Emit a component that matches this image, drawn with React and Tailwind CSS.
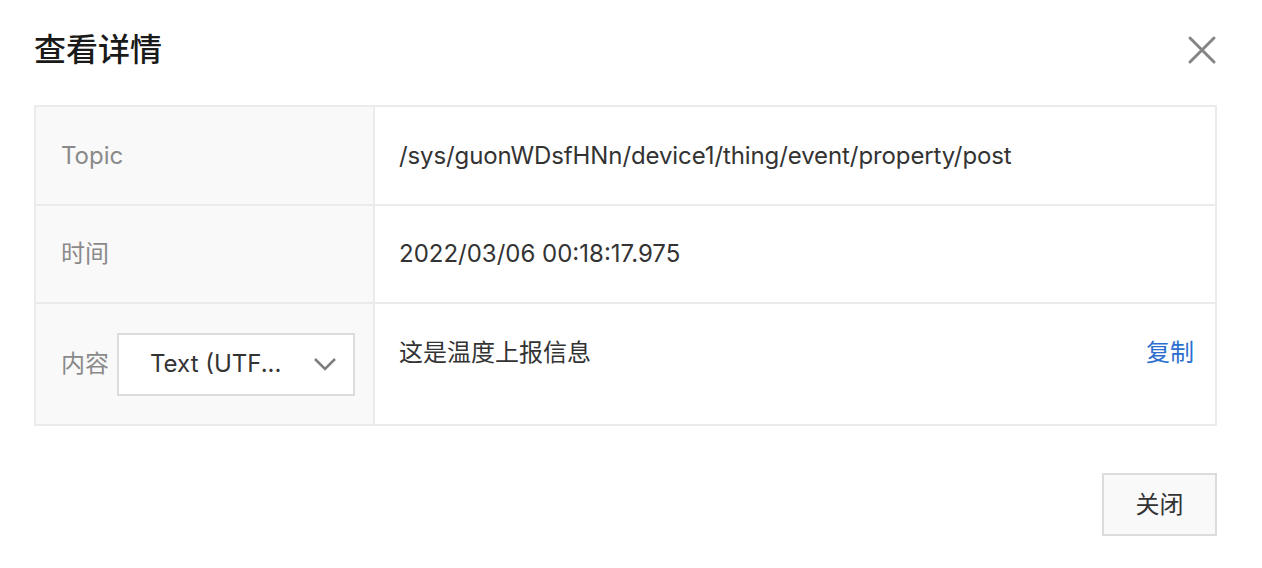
import React from 'react';

const font = { fontFamily: '"Inter", "Noto Sans CJK SC", sans-serif' };

const Row = ({ label, children, className = '', valueClass = '' }) => (
    <div className={`flex ${className}`}>
        <div className="w-[339px] shrink-0 bg-[#f9f9f9] border-r-2 border-[#ebebeb] flex items-center pl-[25px] gap-[8px]">
            {label}
        </div>
        <div className={`flex-1 pl-[24px] pr-[21px] ${valueClass}`}>{children}</div>
    </div>
);

export default function App() {
    return (
        <div className="w-[1262px] h-[568px] bg-white" style={font}>
            {/* Header */}
            <div className="h-[100px] flex items-center justify-between pl-[34px] pr-[44px]">
                <h1 className="text-[32px] font-medium text-[#1a1a1a] leading-none">查看详情</h1>
                <svg width="32" height="32" viewBox="0 0 32 32" className="text-[#858585]">
                    <path d="M4 4L28 28M28 4L4 28" stroke="currentColor" strokeWidth="3" strokeLinecap="round" />
                </svg>
            </div>

            {/* Table */}
            <div className="w-[1183px] ml-[34px] mt-[5px] border-2 border-[#ebebeb] text-[24px]">
                <Row label={<span className="text-[#8a8a8a]">Topic</span>} className="h-[97px]" valueClass="flex items-center text-[#333] tracking-[-0.1px]">
                    /sys/guonWDsfHNn/device1/thing/event/property/post
                </Row>
                <Row label={<span className="text-[#8a8a8a]">时间</span>} className="h-[98px] border-t-2 border-[#ebebeb]" valueClass="flex items-center text-[#333]">
                    2022/03/06 00:18:17.975
                </Row>
                <Row
                    label={
                        <>
                            <span className="text-[#8a8a8a]">内容</span>
                            <div className="w-[238px] h-[63px] bg-white border-2 border-[#dcdcdc] flex items-center justify-between pl-[31px] pr-[16px]">
                                <span className="text-[#333]">Text (UTF...</span>
                                <svg width="24" height="14" viewBox="0 0 24 14" className="text-[#7d7d7d]">
                                    <path d="M2 2L12 12L22 2" fill="none" stroke="currentColor" strokeWidth="2.5" />
                                </svg>
                            </div>
                        </>
                    }
                    className="h-[122px] border-t-2 border-[#ebebeb]"
                    valueClass="flex items-start justify-between pt-[31px]"
                >
                    <span className="text-[#333]">这是温度上报信息</span>
                    <span className="text-[#2c6fcf]">复制</span>
                </Row>
            </div>

            {/* Footer */}
            <div className="flex justify-end pr-[45px] mt-[47px]">
                <button className="w-[115px] h-[63px] border-2 border-[#dcdcdc] bg-[#f9f9f9] text-[24px] text-[#333]">关闭</button>
            </div>
        </div>
    );
}
